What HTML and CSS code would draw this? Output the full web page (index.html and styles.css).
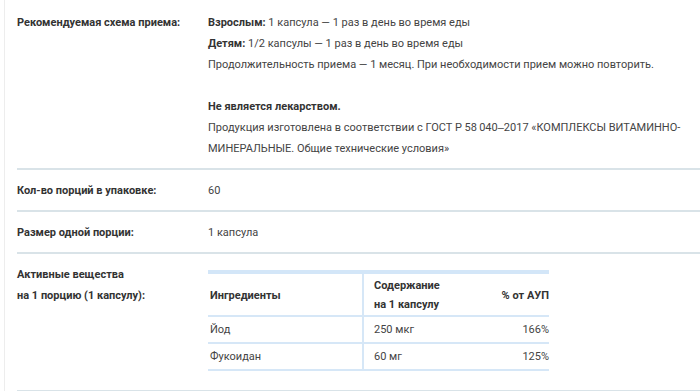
FILE: index.html
```html
<!DOCTYPE html>
<html>
    <head>
        <meta charset="utf-8">
        <title>Характеристики</title>
        <link rel="stylesheet" href="styles.css">
    </head>
    <body>
        <div class="specs">
            <div class="spec-row spec-row-first">
                <div class="spec-label">Рекомендуемая схема приема:</div>
                <div class="spec-value">
                    <p><b>Взрослым:</b> 1 капсула — 1 раз в день во время еды</p>
                    <p><b>Детям:</b> 1/2 капсулы — 1 раз в день во время еды</p>
                    <p>Продолжительность приема — 1 месяц. При необходимости прием можно повторить.</p>
                    <p>&nbsp;</p>
                    <p><b>Не является лекарством.</b></p>
                    <p>Продукция изготовлена в соответствии с ГОСТ Р 58&#8201;040‒2017 «КОМПЛЕКСЫ ВИТАМИННО-МИНЕРАЛЬНЫЕ. Общие технические условия»</p>
                </div>
            </div>

            <div class="spec-row">
                <div class="spec-label">Кол-во порций в упаковке:</div>
                <div class="spec-value">60</div>
            </div>

            <div class="spec-row">
                <div class="spec-label">Размер одной порции:</div>
                <div class="spec-value">1 капсула</div>
            </div>

            <div class="spec-row spec-row-table">
                <div class="spec-label">Активные вещества<br>на 1 порцию (1 капсулу):</div>
                <div class="spec-value">
                    <table class="ingredients">
                        <thead>
                            <tr>
                                <th class="col-name">Ингредиенты</th>
                                <th class="col-amount">Содержание<br>на 1 капсулу</th>
                                <th class="col-percent">% от АУП</th>
                            </tr>
                        </thead>
                        <tbody>
                            <tr>
                                <td class="col-name">Йод</td>
                                <td class="col-amount">250 мкг</td>
                                <td class="col-percent">166%</td>
                            </tr>
                            <tr>
                                <td class="col-name">Фукоидан</td>
                                <td class="col-amount">60 мг</td>
                                <td class="col-percent">125%</td>
                            </tr>
                        </tbody>
                    </table>
                </div>
            </div>
        </div>
    </body>
</html>
```

FILE: styles.css
```css
body { margin: 0; background: #fff; font-family: Roboto, "Liberation Sans", Arial, sans-serif; font-size: 11px; color: #3a3a3a; }
.specs { margin-left: 4px; padding-left: 12px; border-left: 1px solid #ededed; min-height: 391px; box-sizing: border-box; }
.spec-row { display: flex; padding: 10px 0 9px; line-height: 21px; border-bottom: 2px solid #d9e3e8; }
.spec-row-first { padding-top: 12px; }
.spec-label { width: 191px; flex-shrink: 0; font-weight: bold; color: #333; }
.spec-value { flex: 1; color: #444; padding-right: 10px; }
.spec-value p { margin: 0; }
.spec-value b { color: #333; }
.spec-row-table { padding-bottom: 19px; }

.ingredients { width: 341px; margin-top: 6px; border-collapse: collapse; border-top: 4px solid #d3e6f8; }
.ingredients th, .ingredients td { padding: 3px 0 3px 2px; border-bottom: 2px solid #d6e7f7; text-align: left; vertical-align: middle; line-height: 19px; }
.ingredients th { font-weight: bold; color: #333; padding-top: 2px; padding-bottom: 1px; }
.ingredients .col-name { width: 152px; border-right: 2px solid #d6e7f7; }
.ingredients .col-amount { padding-left: 10px; width: 100px; }
.ingredients .col-percent { text-align: right; padding-left: 0; }
```
